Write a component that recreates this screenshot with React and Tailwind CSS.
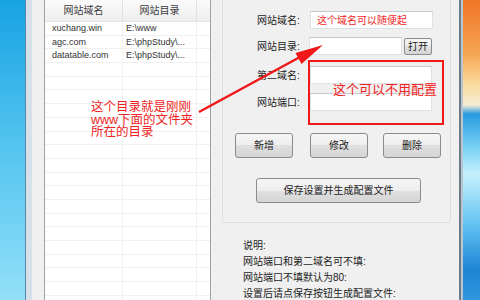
import React from 'react';

const sites = [
  { domain: 'xuchang.win', dir: 'E:\\www' },
  { domain: 'agc.com', dir: 'E:\\phpStudy\\...' },
  { domain: 'datatable.com', dir: 'E:\\phpStudy\\...' },
];

const btn =
  'h-[25px] rounded-[3px] border border-[#8c8c8c] bg-[linear-gradient(to_bottom,#f6f6f6,#ededed_50%,#e0e0e0_50%,#d5d5d5)] text-[10px] text-[#222] flex items-center justify-center';

const input = 'h-[18px] bg-white border border-[#dde2e7] border-t-[#c6cacf]';

const SiteList = () => {
  const empty = Array.from({ length: 18 });
  return (
    <div className="w-[167px] shrink-0 h-full border-x border-[#9ea2a8] bg-white flex flex-col overflow-hidden">
      <div className="h-[22px] shrink-0 flex bg-[linear-gradient(to_bottom,#fbfbfb,#eeeeee)] border-b border-[#e6e6e6] text-[10px] text-[#3c3c3c]">
        <div className="w-[78px] border-r border-[#e2e2e2] flex items-center justify-center">网站域名</div>
        <div className="w-[74px] border-r border-[#e2e2e2] flex items-center justify-center">网站目录</div>
        <div className="flex-1" />
      </div>
      {sites.map((s) => (
        <div key={s.domain} className="h-[13.7px] shrink-0 flex border-b border-[#f0f0f0] text-[9px] text-[#333] leading-[13px]">
          <div className="w-[78px] border-r border-[#f0f0f0] pl-[7px] whitespace-nowrap overflow-hidden">{s.domain}</div>
          <div className="w-[74px] border-r border-[#f0f0f0] pl-[3px] whitespace-nowrap overflow-hidden">{s.dir}</div>
          <div className="flex-1" />
        </div>
      ))}
      {empty.map((_, i) => (
        <div key={i} className="h-[13.7px] shrink-0 flex border-b border-[#f0f0f0]">
          <div className="w-[78px] border-r border-[#f0f0f0]" />
          <div className="w-[74px] border-r border-[#f0f0f0]" />
          <div className="flex-1" />
        </div>
      ))}
    </div>
  );
};

const Field = ({ label, className, children }) => (
  <div className={`flex items-center pl-[34px] ${className}`}>
    <div className="w-[53px] text-[10px] text-[#222] whitespace-nowrap">{label}</div>
    {children}
  </div>
);

export default function App() {
  return (
    <div className="relative w-[480px] h-[300px] overflow-hidden flex [font-family:'Liberation_Sans','Noto_Sans_CJK_SC',sans-serif]">
      {/* desktop, left */}
      <div className="w-[25px] shrink-0 bg-[linear-gradient(to_bottom,#17a3e3,#5cc8f1_55%,#92dff8)]" />

      {/* window frame */}
      <div className="w-[1px] shrink-0 bg-[#5a87a8]" />
      <div className="w-[6px] shrink-0 bg-[#d5e0e9]" />

      <div className="w-[427px] shrink-0 bg-[#f0f0f0] flex pl-[12px] pr-[8px]">
        <SiteList />

        <div className="ml-[11px] w-[229px] flex flex-col">
          {/* group box */}
          <div className="border-x border-b border-[#d5dfe5] rounded-b-[3px] flex flex-col pt-[11px] pb-[19px]">
            <Field label="网站域名:">
              <div className={`${input} w-[123px] flex items-center pl-[6px] text-[10px] text-[#f02424] whitespace-nowrap`}>
                这个域名可以随便起
              </div>
            </Field>
            <Field label="网站目录:" className="mt-[8px]">
              <div className={`${input} w-[93px] -ml-[1px]`} />
              <div className="ml-[2px] h-[17px] w-[28px] rounded-[2px] border border-[#8c8c8c] bg-[linear-gradient(to_bottom,#f6f6f6,#ededed_50%,#e0e0e0_50%,#d5d5d5)] text-[10px] text-[#222] flex items-center justify-center">
                打开
              </div>
            </Field>
            <Field label="第二域名:" className="mt-[11px]">
              <div className={`${input} w-[122px]`} />
            </Field>
            <Field label="网站端口:" className="mt-[9px]">
              <div className={`${input} w-[122px]`} />
            </Field>

            <div className="flex pl-[12px] mt-[22px]">
              <div className={`${btn} w-[58px]`}>新增</div>
              <div className={`${btn} w-[58px] ml-[17px]`}>修改</div>
              <div className={`${btn} w-[58px] ml-[15px]`}>删除</div>
            </div>

            <div className={`${btn} w-[165px] ml-[33px] mt-[20px]`}>保存设置并生成配置文件</div>
          </div>

          {/* notes */}
          <div className="pl-[21px] mt-[15px] text-[10px] leading-[16px] text-[#222] whitespace-nowrap">
            <div>说明:</div>
            <div>网站端口和第二域名可不填:</div>
            <div>网站端口不填默认为80:</div>
            <div>设置后请点保存按钮生成配置文件:</div>
          </div>
        </div>
      </div>

      <div className="w-[2px] shrink-0 bg-[#6b7b88]" />
      <div className="w-[2px] shrink-0 bg-[#b9c6cf]" />

      {/* desktop, right */}
      <div className="flex-1 bg-[linear-gradient(to_bottom,#ef7526,#f6a654_18%,#fbdb9c_28%,#f4ecd2_35%,#2a9be0_38%,#7fd4f6_50%,#c6f0fc_58%,#62c3f2_75%,#1d84d4_90%,#2f97de)]" />

      {/* red annotations */}
      <div className="absolute left-[308px] top-[60px] w-[136px] h-[65px] border-2 border-[#f01818]" />
      <div className="absolute left-[333px] top-[81px] text-[13px] leading-[18px] text-[#f02424] whitespace-nowrap">
        这个可以不用配置
      </div>
      <div className="absolute left-[91px] top-[101px] text-[12.5px] leading-[12.5px] text-[#f02424] whitespace-nowrap">
        <div>这个目录就是刚刚</div>
        <div>www下面的文件夹</div>
        <div>所在的目录</div>
      </div>
      <svg className="absolute left-0 top-0" width="480" height="300" viewBox="0 0 480 300">
        <line x1="199" y1="112" x2="300" y2="57" stroke="#f01818" strokeWidth="2.5" />
        <polygon points="323,45 301.5,64 295.5,53" fill="#f01818" />
      </svg>
    </div>
  );
}
